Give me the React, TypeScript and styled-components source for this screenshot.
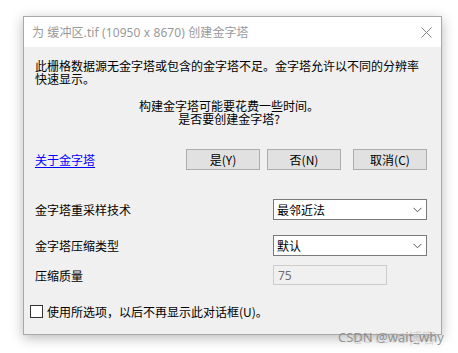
import React from "react";
import styled, { createGlobalStyle } from "styled-components";

const Global = createGlobalStyle`
  html, body { margin: 0; padding: 0; background: #ffffff; }
  body { width: 458px; height: 353px; overflow: hidden; position: relative;
    font-family: "Noto Sans CJK SC", "Noto Sans", sans-serif; }
`;

const Dialog = styled.div`
  box-sizing: border-box;
  margin: 16px 0 0 23px;
  width: 419px;
  height: 319px;
  border: 1px solid #a9a9a9;
  background: #f0f0f0;
  box-shadow: 0 3px 12px rgba(0, 0, 0, 0.28);
  display: flex;
  flex-direction: column;
`;

const TitleBar = styled.div`
  height: 30px;
  background: #ffffff;
  display: flex;
  align-items: center;
  justify-content: space-between;
  padding: 0 9px 0 8px;
`;

const TitleText = styled.span`
  font-family: "Noto Sans", "Noto Sans CJK SC", sans-serif;
  font-size: 12px;
  color: #999999;
  letter-spacing: 0.1px;
`;

const CloseIcon = styled.svg`
  width: 11px;
  height: 11px;
`;

const Body = styled.div`
  padding: 12px 14px 0 11px;
  display: flex;
  flex-direction: column;
  font-size: 12px;
  line-height: 13px;
  color: #000;
`;

const Message = styled.p`
  margin: 0;
  width: 386px;
`;

const Center = styled.p`
  margin: 14px 0 0;
  text-align: center;
  padding-right: 4px;
`;

const ActionRow = styled.div`
  margin-top: 24px;
  display: flex;
  align-items: center;
  height: 21px;
`;

const Link = styled.a`
  color: #0000ff;
  text-decoration: underline;
  text-underline-offset: 2px;
  cursor: pointer;
`;

const Buttons = styled.div`
  margin-left: auto;
  display: flex;
`;

const Button = styled.button<{ $gap?: number }>`
  box-sizing: border-box;
  width: 74px;
  height: 21px;
  margin-right: ${(p) => p.$gap ?? 0}px;
  border: 1px solid #adadad;
  background: #e1e1e1;
  font-family: "Noto Sans CJK SC", "Noto Sans", sans-serif;
  font-size: 12px;
  line-height: 13px;
  color: #000;
  padding: 0;
`;

const Form = styled.div`
  margin-top: 29px;
  display: grid;
  grid-template-columns: 238px 154px;
  row-gap: 15px;
  align-items: center;
`;

const Label = styled.span`
  font-size: 12px;
`;

const Select = styled.div`
  box-sizing: border-box;
  height: 21px;
  border: 1px solid #7a7a7a;
  background: #ffffff;
  display: flex;
  align-items: center;
  justify-content: space-between;
  padding: 0 4px 0 3px;
`;

const Chevron = styled.svg`
  width: 9px;
  height: 6px;
`;

const Disabled = styled.div`
  box-sizing: border-box;
  width: 114px;
  height: 20px;
  margin-top: -6px;
  border: 1px solid #cccccc;
  background: #f0f0f0;
  color: #6d6d6d;
  font-family: "Noto Sans", sans-serif;
  font-size: 12px;
  display: flex;
  align-items: center;
  padding-left: 4px;
`;

const QualityLabel = styled(Label)`
  margin-top: -6px;
`;

const CheckRow = styled.label`
  margin: 20px 0 0 -5px;
  display: flex;
  align-items: center;
  gap: 4px;
`;

const Box = styled.span`
  box-sizing: border-box;
  width: 13px;
  height: 13px;
  border: 1px solid #333333;
  background: #ffffff;
`;

const Watermark = styled.div`
  position: absolute;
  left: 338px;
  top: 328px;
  font-family: "Noto Sans", "Noto Sans CJK SC", sans-serif;
  font-size: 13px;
  color: rgba(120, 120, 120, 0.75);
  white-space: nowrap;
`;

const Ghost = styled.div`
  position: absolute;
  left: 352px;
  top: 327px;
  font-family: "Noto Sans", "Noto Sans CJK SC", sans-serif;
  font-size: 14px;
  color: rgba(160, 160, 160, 0.35);
  white-space: nowrap;
`;

const ChevronDown = () => (
  <Chevron viewBox="0 0 9 6">
    <path d="M0.5 0.8 L4.5 4.8 L8.5 0.8" fill="none" stroke="#555" strokeWidth="1" />
  </Chevron>
);

export default function App() {
  return (
    <>
      <Global />
      <Dialog>
        <TitleBar>
          <TitleText>为 缓冲区.tif (10950 x 8670) 创建金字塔</TitleText>
          <CloseIcon viewBox="0 0 11 11">
            <path d="M0.5 0.5 L10.5 10.5 M10.5 0.5 L0.5 10.5" stroke="#808080" strokeWidth="1" />
          </CloseIcon>
        </TitleBar>
        <Body>
          <Message>此栅格数据源无金字塔或包含的金字塔不足。金字塔允许以不同的分辨率快速显示。</Message>
          <Center>
            构建金字塔可能要花费一些时间。
            <br />
            是否要创建金字塔?
          </Center>
          <ActionRow>
            <Link>关于金字塔</Link>
            <Buttons>
              <Button $gap={7}>是(Y)</Button>
              <Button $gap={12}>否(N)</Button>
              <Button>取消(C)</Button>
            </Buttons>
          </ActionRow>
          <Form>
            <Label>金字塔重采样技术</Label>
            <Select>
              <span>最邻近法</span>
              <ChevronDown />
            </Select>
            <Label>金字塔压缩类型</Label>
            <Select>
              <span>默认</span>
              <ChevronDown />
            </Select>
            <QualityLabel>压缩质量</QualityLabel>
            <Disabled>75</Disabled>
          </Form>
          <CheckRow>
            <Box />
            <span>使用所选项，以后不再显示此对话框(U)。</span>
          </CheckRow>
        </Body>
      </Dialog>
      <Ghost>@51CTO博客</Ghost>
      <Watermark>CSDN @wait_why</Watermark>
    </>
  );
}
